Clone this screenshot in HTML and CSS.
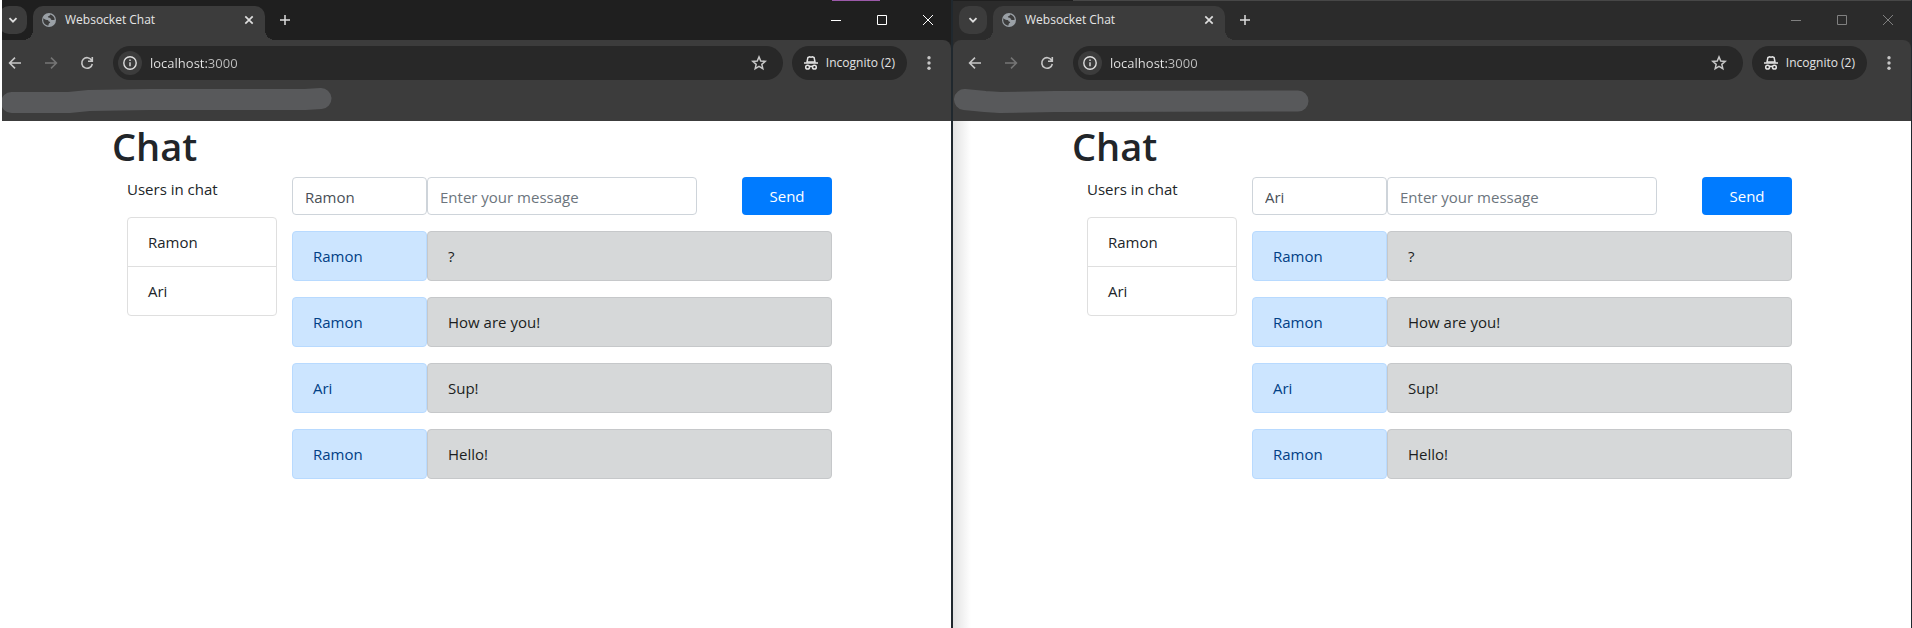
FILE: index.html
```html
<!DOCTYPE html>
<html lang="en">
<head>
<meta charset="utf-8">
<title>Websocket Chat</title>
<link rel="stylesheet" href="styles.css">
</head>
<body>
<svg class="sprite" aria-hidden="true">
  <symbol id="chevron" viewBox="0 0 10 10"><path d="M1.500 3.200 5 6.700 8.500 3.200" fill="none" stroke="currentColor" stroke-width="1.800"/></symbol>
  <symbol id="globe" viewBox="0 0 14 14"><circle cx="7" cy="7" r="7" fill="#9aa0a6"/><path d="M1.300 5.200C2.800 6.200 3.500 6.900 5 6.900 6.200 6.900 6.700 7.500 6.700 8.500 7.600 8.500 8.200 9 8.200 9.800 7.200 9.900 6.600 10.800 6.500 12.600 3.400 12.500 1.200 10 1.200 7ZM8.200 1.400C7.800 2.700 6.900 3.200 5.900 3.300 5.800 4.200 6.200 4.700 7 4.700 8.200 4.700 8.700 5.400 8.900 6.200 9.300 7.200 10.600 7.300 12.700 6.800 12.700 4.300 10.900 1.900 8.200 1.400Z" fill="#3c3c3c"/></symbol>
  <symbol id="cross" viewBox="0 0 10 10"><path d="m1.300 1.300 7.400 7.400M8.700 1.300 1.300 8.700" fill="none" stroke="currentColor" stroke-width="1.700"/></symbol>
  <symbol id="plus" viewBox="0 0 10 10"><path d="M5 0v10M0 5h10" fill="none" stroke="currentColor" stroke-width="1.500"/></symbol>
  <symbol id="min" viewBox="0 0 10 10"><path d="M0 5.500h10" stroke="currentColor"/></symbol>
  <symbol id="max" viewBox="0 0 10 10"><path d="M.5.5h9v9h-9z" fill="none" stroke="currentColor"/></symbol>
  <symbol id="close" viewBox="0 0 10 10"><path d="m0 0 10 10M10 0 0 10" fill="none" stroke="currentColor"/></symbol>
  <symbol id="back" viewBox="0 0 16 16"><path d="M14 8H3M8 2.600 2.600 8 8 13.400" fill="none" stroke="currentColor" stroke-width="1.600"/></symbol>
  <symbol id="forward" viewBox="0 0 16 16"><path d="M2 8h11M8 2.600 13.400 8 8 13.400" fill="none" stroke="currentColor" stroke-width="1.600"/></symbol>
  <symbol id="reload" viewBox="0 0 16 16"><path d="M12.700 5.300A5.300 5.300 0 1 0 13.300 9M13.300 2v4.200H9" fill="none" stroke="currentColor" stroke-width="1.600"/></symbol>
  <symbol id="info" viewBox="0 0 14 14"><circle cx="7" cy="7" r="6.200" fill="none" stroke="currentColor" stroke-width="1.400"/><path d="M7 6.300v4M7 3.500v1.500" stroke="currentColor" stroke-width="1.400"/></symbol>
  <symbol id="star" viewBox="0 0 16 16"><path d="m8 1.900 1.750 4.100 4.450.400-3.370 2.940 1 4.360L8 11.400l-3.830 2.300 1-4.360L1.800 6.400l4.450-.400Z" fill="none" stroke="currentColor" stroke-width="1.500"/></symbol>
  <symbol id="spy" viewBox="0 0 14 14"><path d="M3 6 3.900 1.500 5.500.8 7 1.300 8.500.8l1.600.7L11 6Z" fill="none" stroke="currentColor" stroke-width="1.500"/><path d="M0 7h14M5 10.800q2-1 4 0" fill="none" stroke="currentColor" stroke-width="1.500"/><circle cx="3.600" cy="11.200" r="1.900" fill="none" stroke="currentColor" stroke-width="1.500"/><circle cx="10.400" cy="11.200" r="1.900" fill="none" stroke="currentColor" stroke-width="1.500"/></symbol>
  <symbol id="dots" viewBox="0 0 4 14"><circle cx="2" cy="1.700" r="1.700" fill="currentColor"/><circle cx="2" cy="7" r="1.700" fill="currentColor"/><circle cx="2" cy="12.300" r="1.700" fill="currentColor"/></symbol>
</svg>

<div class="desktop">
  <section class="pane pane-left" aria-label="Ramon's window">
    <div class="window">
      <div class="tabstrip">
        <button class="tab-search" aria-label="Search tabs"><svg class="i10"><use href="#chevron"/></svg></button>
        <div class="tab">
          <svg class="i14"><use href="#globe"/></svg>
          <span class="tab-title">Websocket Chat</span>
          <button class="tab-close" aria-label="Close tab"><svg class="i10"><use href="#cross"/></svg></button>
        </div>
        <button class="new-tab" aria-label="New tab"><svg class="i10"><use href="#plus"/></svg></button>
        <div class="controls">
          <button aria-label="Minimize"><svg class="i10"><use href="#min"/></svg></button>
          <button aria-label="Maximize"><svg class="i10"><use href="#max"/></svg></button>
          <button aria-label="Close"><svg class="i10"><use href="#close"/></svg></button>
        </div>
      </div>
      <div class="chrome">
        <div class="toolbar">
          <button class="nav" aria-label="Back"><svg class="i16"><use href="#back"/></svg></button>
          <button class="nav nav-off" aria-label="Forward"><svg class="i16"><use href="#forward"/></svg></button>
          <button class="nav" aria-label="Reload"><svg class="i16"><use href="#reload"/></svg></button>
          <div class="omnibox">
            <button class="site-info" aria-label="Site information"><svg class="i14"><use href="#info"/></svg></button>
            <input class="url" type="text" value="localhost:3000" aria-label="Address">
            <button class="bookmark" aria-label="Bookmark"><svg class="i16"><use href="#star"/></svg></button>
          </div>
          <button class="incognito"><svg class="i14"><use href="#spy"/></svg>Incognito (2)</button>
          <button class="menu" aria-label="Menu"><svg class="dots"><use href="#dots"/></svg></button>
        </div>
        <div class="bookmarks">
          <svg class="marker" viewBox="0 0 360 35"><path d="M18.500 16.500H76L96 14.500 156 13.500H312L328 12.500" /></svg>
        </div>
      </div>
      <main class="page">
        <div class="container">
          <h1>Chat</h1>
          <div class="row">
            <div class="users">
              <p>Users in chat</p>
              <ul><li>Ramon</li><li>Ari</li></ul>
            </div>
            <div class="chat">
              <form class="composer">
                <input type="text" value="Ramon" aria-label="Name">
                <input type="text" placeholder="Enter your message" aria-label="Message">
                <button class="send" type="button">Send</button>
              </form>
              <div class="message"><div class="author">Ramon</div><div class="text">?</div></div>
              <div class="message"><div class="author">Ramon</div><div class="text">How are you!</div></div>
              <div class="message"><div class="author">Ari</div><div class="text">Sup!</div></div>
              <div class="message"><div class="author">Ramon</div><div class="text">Hello!</div></div>
            </div>
          </div>
        </div>
      </main>
    </div>
  </section>

  <section class="pane pane-right" aria-label="Ari's window">
    <div class="window inactive">
      <div class="tabstrip">
        <button class="tab-search" aria-label="Search tabs"><svg class="i10"><use href="#chevron"/></svg></button>
        <div class="tab">
          <svg class="i14"><use href="#globe"/></svg>
          <span class="tab-title">Websocket Chat</span>
          <button class="tab-close" aria-label="Close tab"><svg class="i10"><use href="#cross"/></svg></button>
        </div>
        <button class="new-tab" aria-label="New tab"><svg class="i10"><use href="#plus"/></svg></button>
        <div class="controls">
          <button aria-label="Minimize"><svg class="i10"><use href="#min"/></svg></button>
          <button aria-label="Maximize"><svg class="i10"><use href="#max"/></svg></button>
          <button aria-label="Close"><svg class="i10"><use href="#close"/></svg></button>
        </div>
      </div>
      <div class="chrome">
        <div class="toolbar">
          <button class="nav" aria-label="Back"><svg class="i16"><use href="#back"/></svg></button>
          <button class="nav nav-off" aria-label="Forward"><svg class="i16"><use href="#forward"/></svg></button>
          <button class="nav" aria-label="Reload"><svg class="i16"><use href="#reload"/></svg></button>
          <div class="omnibox">
            <button class="site-info" aria-label="Site information"><svg class="i14"><use href="#info"/></svg></button>
            <input class="url" type="text" value="localhost:3000" aria-label="Address">
            <button class="bookmark" aria-label="Bookmark"><svg class="i16"><use href="#star"/></svg></button>
          </div>
          <button class="incognito"><svg class="i14"><use href="#spy"/></svg>Incognito (2)</button>
          <button class="menu" aria-label="Menu"><svg class="dots"><use href="#dots"/></svg></button>
        </div>
        <div class="bookmarks">
          <svg class="marker" viewBox="0 0 360 35"><path d="M11.500 13.500 32 15.500 47 16.500 102 15.500 345 15" /></svg>
        </div>
      </div>
      <main class="page">
        <div class="container">
          <h1>Chat</h1>
          <div class="row">
            <div class="users">
              <p>Users in chat</p>
              <ul><li>Ramon</li><li>Ari</li></ul>
            </div>
            <div class="chat">
              <form class="composer">
                <input type="text" value="Ari" aria-label="Name">
                <input type="text" placeholder="Enter your message" aria-label="Message">
                <button class="send" type="button">Send</button>
              </form>
              <div class="message"><div class="author">Ramon</div><div class="text">?</div></div>
              <div class="message"><div class="author">Ramon</div><div class="text">How are you!</div></div>
              <div class="message"><div class="author">Ari</div><div class="text">Sup!</div></div>
              <div class="message"><div class="author">Ramon</div><div class="text">Hello!</div></div>
            </div>
          </div>
        </div>
      </main>
    </div>
  </section>
</div>
</body>
</html>
```
FILE: styles.css
```css
* { box-sizing: border-box; }

body {
  margin: 0;
  font: 15px/24px "Open Sans", "Noto Sans", sans-serif;
  color: #212529;
}

button, input { font: inherit; color: inherit; margin: 0; }
button { display: flex; align-items: center; justify-content: center; padding: 0; border: 0; background: none; }
svg { display: block; flex: none; }

.sprite { position: absolute; width: 0; height: 0; }
.i10 { width: 10px; height: 10px; }
.i14 { width: 14px; height: 14px; }
.i16 { width: 16px; height: 16px; }
.dots { width: 4px; height: 14px; }

/* Two windows side by side; the left one runs off the screen edge */
.desktop { display: flex; gap: 2px; min-height: 100vh; padding-right: 1px; background: #20282e; }
.pane { display: flex; min-width: 0; overflow: hidden; }
.pane-left { flex: 1 1 2px; border-left: 2px solid #fff; }
.pane-right { flex: 1 1 9px; }
.pane-left .window { margin-left: -9px; }
.window { flex: 1; display: flex; flex-direction: column; min-width: 0; background: #1f1f1f; color: #dedede; }
.window.inactive { background: #2b2b2b; }

.tabstrip { display: flex; align-items: center; height: 40px; padding-left: 6px; }
.pane-left .tabstrip { background: linear-gradient(#9b59a8, #9b59a8) right 71px top / 48px 1px no-repeat; }
.pane-right .tabstrip { background: linear-gradient(90deg, #1f1f1f 120px, #474747 120px) top / 100% 1px no-repeat; }
.tab-search { width: 28px; height: 28px; border-radius: 10px; background: #3c3c3c; }
.tab {
  position: relative;
  align-self: flex-end;
  display: flex;
  align-items: center;
  width: 232px;
  height: 34px;
  margin-left: 6px;
  padding: 0 6px 6px 9px;
  border-radius: 10px 10px 0 0;
  background: #3c3c3c;
}
.tab::before, .tab::after { content: ""; position: absolute; bottom: 0; width: 10px; height: 10px; }
.tab::before { right: 100%; background: radial-gradient(circle at 0 0, transparent 10px, #3c3c3c 10px); }
.tab::after { left: 100%; background: radial-gradient(circle at 100% 0, transparent 10px, #3c3c3c 10px); }
.tab-title { flex: 1; margin-left: 9px; font-size: 12px; line-height: 20px; color: #e6e6e6; }
.tab-close { width: 20px; height: 20px; }
.new-tab { width: 28px; height: 28px; margin-left: 6px; }
.controls { display: flex; margin-left: auto; color: #fff; }
.controls button { width: 46px; height: 40px; }
.inactive .controls { color: #808080; }

.chrome { background: #3c3c3c; border-radius: 8px 8px 0 0; }
.toolbar { display: flex; align-items: center; height: 46px; padding: 0 8px 0 4px; }
.nav { width: 36px; height: 34px; color: #c7c7c7; }
.nav-off { color: #757575; }
.omnibox {
  flex: 1;
  display: flex;
  align-items: center;
  min-width: 0;
  height: 34px;
  margin-left: 8px;
  padding: 0 14px 0 5px;
  border-radius: 17px;
  background: #282828;
}
.site-info { width: 24px; height: 24px; border-radius: 50%; background: #3c3c3c; }
.url {
  flex: 1;
  min-width: 0;
  height: 24px;
  margin-left: 8px;
  padding: 0;
  border: 0;
  outline: 0;
  font-size: 13px;
  color: #e3e3e3;
  background: linear-gradient(90deg, #e8e8e8 58px, #c0c0c0 58px);
  -webkit-background-clip: text;
  background-clip: text;
  -webkit-text-fill-color: transparent;
}
.bookmark { width: 20px; height: 24px; color: #c7c7c7; }
.incognito {
  height: 34px;
  margin-left: 9px;
  padding: 0 12px;
  gap: 8px;
  border-radius: 17px;
  background: #282828;
  font-size: 12px;
  color: #e3e3e3;
  white-space: nowrap;
}
.menu { width: 28px; height: 28px; margin-left: 8px; color: #c7c7c7; }

.bookmarks { height: 35px; }
.marker { width: 360px; height: 35px; }
.marker path { fill: none; stroke: #58595b; stroke-width: 21; stroke-linecap: round; stroke-linejoin: round; }

.page { flex: 1; background: #fff; color: #212529; }
.inactive .page { background: linear-gradient(90deg, #e2e2e2, #fff 18px); }
.container { max-width: 720px; margin: 0 auto; }
h1 { margin: 0 0 6px; font-size: 38px; line-height: 50px; font-weight: 600; }
.row { display: grid; grid-template-columns: 3fr 9fr; }
.users { padding: 0 15px; }
.users p { margin: 0 0 16px; }
.users ul { margin: 0; padding: 0; list-style: none; border: 1px solid #dfdfdf; border-radius: 4px; background: #fff; }
.users li { padding: 12px 20px; }
.users li + li { border-top: 1px solid #dfdfdf; }

.composer { display: grid; grid-template-columns: 3fr 6fr 1fr 2fr; margin-bottom: 16px; }
.composer input {
  min-width: 0;
  height: 38px;
  padding: 8px 12px 6px;
  border: 1px solid #ced4da;
  border-radius: 4px;
  background: #fff;
  color: #495057;
}
.composer input::placeholder { color: #6c757d; opacity: 1; }
.send { grid-column: 4; height: 38px; border-radius: 4px; background: #007bff; color: #fff; }

.message { display: grid; grid-template-columns: 3fr 9fr; margin-bottom: 16px; }
.author, .text { padding: 12px 20px; border: 1px solid; border-radius: 4px; }
.author { background: #cce5ff; border-color: #b8daff; color: #004085; }
.text { background: #d6d8d9; border-color: #c6c8ca; color: #1b1e21; }
```
